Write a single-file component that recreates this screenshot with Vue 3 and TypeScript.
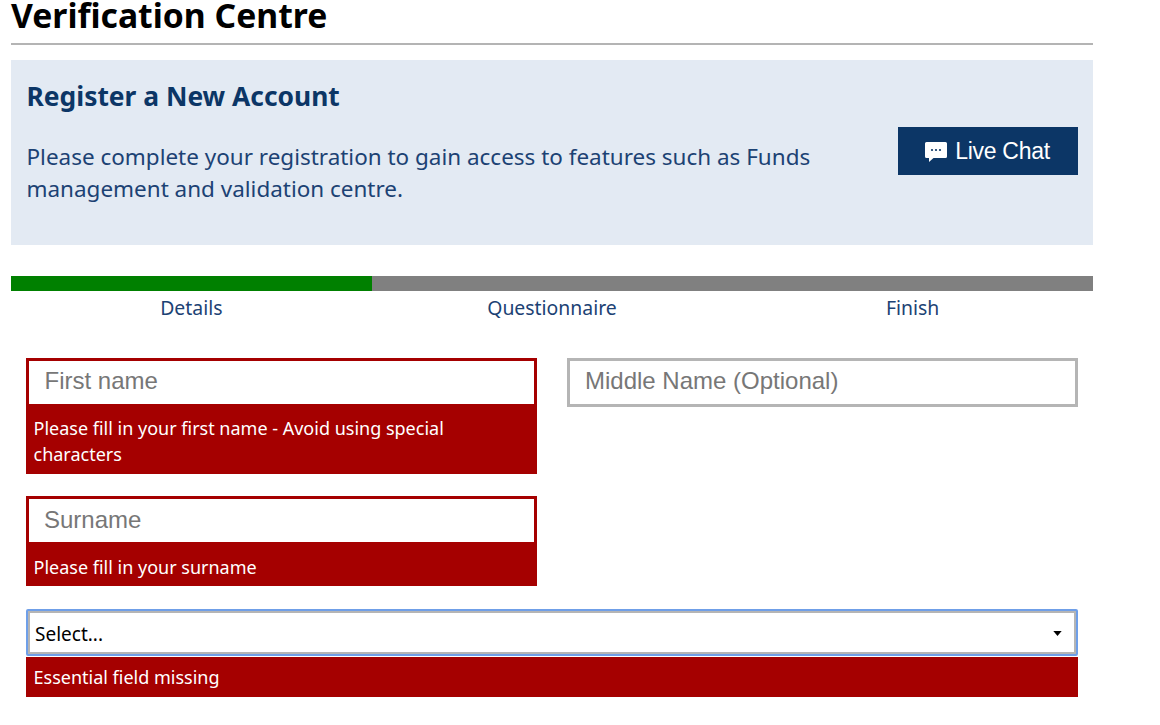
<script setup lang="ts">
const steps = ["Details", "Questionnaire", "Finish"];
</script>

<template>
  <main class="page">
    <h1 class="title">Verification Centre</h1>
    <section class="banner">
      <div class="banner__text">
        <h2>Register a New Account</h2>
        <p>Please complete your registration to gain access to features such as Funds management and validation centre.</p>
      </div>
      <button class="chat" type="button">
        <svg viewBox="0 0 24 22" aria-hidden="true">
          <path d="M2.5 1h19A1.5 1.5 0 0 1 23 2.500v13a1.500 1.500 0 0 1-1.500 1.500H9.500L5 21v-4H2.500A1.500 1.500 0 0 1 1 15.500v-13A1.500 1.500 0 0 1 2.500 1z" fill="currentColor" />
          <circle cx="8" cy="9" r="1.100" fill="#0c3666" />
          <circle cx="12" cy="9" r="1.100" fill="#0c3666" />
          <circle cx="16" cy="9" r="1.100" fill="#0c3666" />
        </svg>
        <span>Live Chat</span>
      </button>
    </section>

    <div class="progress"><span class="progress__done"></span></div>
    <ol class="steps">
      <li v-for="step in steps" :key="step">{{ step }}</li>
    </ol>

    <form class="form">
      <div class="row row--first">
        <div class="field field--error">
          <input type="text" placeholder="First name" />
          <p class="error error--tall">Please fill in your first name - Avoid using special characters</p>
        </div>
        <div class="field">
          <input type="text" placeholder="Middle Name (Optional)" />
        </div>
      </div>
      <div class="row">
        <div class="field field--error">
          <input type="text" placeholder="Surname" />
          <p class="error">Please fill in your surname</p>
        </div>
      </div>
      <div class="select">
        <div class="select__box">
          <span>Select...</span>
          <svg viewBox="0 0 10 6" aria-hidden="true"><path d="M0 0h10L5 6z" fill="#000" /></svg>
        </div>
        <p class="error error--select">Essential field missing</p>
      </div>
    </form>
  </main>
</template>

<style scoped>
.page {
  width: 1082px;
  margin-left: 11px;
  font-family: "Open Sans", "Noto Sans", sans-serif;
}

.title {
  margin: 0;
  height: 45px;
  box-sizing: border-box;
  border-bottom: 2px solid #b4b4b4;
  font-family: "Noto Sans", sans-serif;
  font-size: 33.700px;
  font-weight: 700;
  line-height: 31px;
  color: #000;
}

.banner {
  margin-top: 15px;
  height: 185px;
  box-sizing: border-box;
  padding: 0 15px 0 15.500px;
  display: flex;
  align-items: center;
  justify-content: space-between;
  background: #e3eaf3;
  color: #0c3666;
}

.banner__text {
  width: 830px;
  align-self: flex-start;
  padding-top: 19.500px;
}

.banner h2 {
  margin: 0 0 29.500px;
  font-family: "Noto Sans", sans-serif;
  font-size: 26.400px;
  font-weight: 700;
  line-height: 32px;
}

.banner p {
  margin: 0;
  font-family: "Noto Sans", sans-serif;
  font-size: 22.470px;
  line-height: 32px;
  color: #1c4274;
}

.chat {
  width: 180px;
  height: 48px;
  margin-bottom: 4px;
  display: flex;
  align-items: center;
  justify-content: center;
  gap: 7px;
  padding: 0 2px 0 0;
  border: 0;
  background: #0c3666;
  color: #fff;
  font-family: "Liberation Sans", Arial, sans-serif;
  font-size: 23px;
  letter-spacing: -0.3px;
}

.chat span {
  padding-top: 2px;
}

.chat svg {
  width: 24px;
  height: 22px;
  margin-top: 2px;
}

.progress {
  margin-top: 31px;
  height: 15px;
  background: #808080;
}

.progress__done {
  display: block;
  width: 361px;
  height: 100%;
  background: #008000;
}

.steps {
  margin: 0;
  padding: 0;
  list-style: none;
  display: grid;
  grid-template-columns: repeat(3, 1fr);
  text-align: center;
  font-family: "Noto Sans", sans-serif;
  font-size: 19.400px;
  line-height: 34px;
  color: #1c4274;
}

.form {
  margin-top: 33px;
  padding: 0 15px;
  display: flex;
  flex-direction: column;
  gap: 22px;
}

.row {
  display: grid;
  grid-template-columns: 511px 511px;
  column-gap: 30px;
  align-items: start;
}

.field input {
  display: block;
  width: 100%;
  height: 49px;
  box-sizing: border-box;
  padding: 0 15px 2px;
  border: 3px solid #b5b5b5;
  border-radius: 0;
  outline: none;
  background: #fff;
  font-family: "Liberation Sans", Arial, sans-serif;
  font-size: 24px;
}

.field input::placeholder {
  color: #777;
  opacity: 1;
}

.field--error {
  background: #a50000;
}

.field--error input {
  height: 46px;
  border-color: #a50000;
  border-bottom-width: 0;
}

.row--first input {
  padding-bottom: 4px;
}

.row--first .field--error input {
  padding-left: 15.500px;
}

.error {
  margin: 0;
  padding: 12px 7.500px 6px;
  font-family: "Noto Sans", sans-serif;
  font-size: 18px;
  line-height: 26px;
  color: #fff;
}

.error--tall {
  padding: 11px 7.500px 7px;
}

.select {
  margin-top: 1px;
}

.select__box {
  height: 47px;
  box-sizing: border-box;
  padding: 2px 14px 0 7px;
  display: flex;
  align-items: center;
  justify-content: space-between;
  border: 2px solid #6f9fe8;
  border-radius: 2px;
  box-shadow: inset 0 0 0 2px #b5b5b5;
  font-family: "Noto Sans", sans-serif;
  font-size: 19px;
  color: #000;
}

.select__box svg {
  width: 9px;
  height: 5px;
}

.error--select {
  margin-top: 1px;
  padding: 7px 7.500px;
  background: #a50000;
}
</style>

<style>
body {
  background: #fff;
  overflow: hidden;
}
</style>
